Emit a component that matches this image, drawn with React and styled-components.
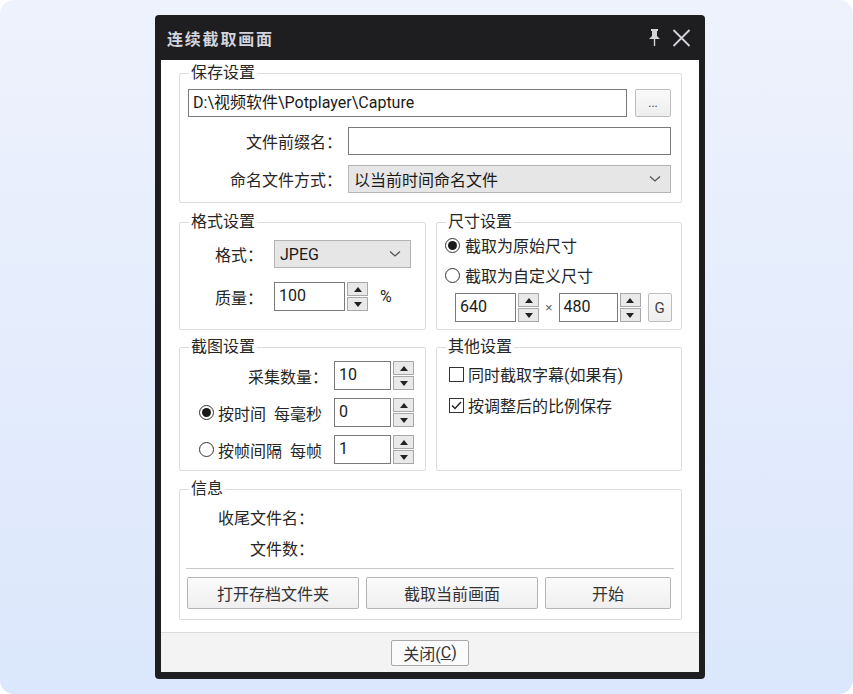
import React from 'react';
import styled, { createGlobalStyle } from 'styled-components';

const Global = createGlobalStyle`
  html, body { margin: 0; padding: 0; background: #ffffff; }
  body { font-family: "Roboto", "Noto Sans CJK SC", sans-serif; color: #262626; }
  * { box-sizing: border-box; }
`;

const Stage = styled.div`
  width: 853px;
  height: 694px;
  border-radius: 14px;
  background: linear-gradient(180deg, #eef2fc 0%, #dbe7fc 100%);
  padding: 15px 0 0 155px;
`;

const Window = styled.div`
  width: 550px;
  height: 664px;
  background: #1e1e21;
  border-radius: 4px;
  padding: 0 6px 7px;
  display: flex;
  flex-direction: column;
`;

const TitleBar = styled.div`
  height: 45px;
  display: flex;
  align-items: center;
  justify-content: space-between;
  padding: 0 8px 0 6px;
`;

const Title = styled.div`
  font-family: "Noto Sans CJK SC", sans-serif;
  font-size: 16px;
  font-weight: 700;
  letter-spacing: 1.8px;
  color: #d4d4dc;
`;

const TitleIcons = styled.div`
  display: flex;
  align-items: center;
  gap: 11px;
`;

const Body = styled.div`
  flex: 1;
  background: #ffffff;
  display: flex;
  flex-direction: column;
`;

const Main = styled.div`
  flex: 1;
  padding: 3px 17px 12px 18px;
  display: flex;
  flex-direction: column;
`;

const Footer = styled.div`
  height: 40px;
  border-top: 1px solid #dadada;
  background: #f3f3f3;
  display: flex;
  align-items: center;
  justify-content: center;
`;

const Row2 = styled.div`
  display: grid;
  grid-template-columns: 247px 246px;
  column-gap: 10px;
  margin-top: ${p => p.$mt}px;
`;

const Group = styled.fieldset`
  margin: ${p => p.$mt || 0}px 0 0 0;
  padding: 0;
  border: 1px solid #dcdcdc;
  border-radius: 2px;
  min-width: 0;
`;

const Legend = styled.legend`
  margin-left: 9px;
  padding: 0 2px;
  font-size: 16px;
  line-height: 20px;
  color: #262626;
`;

const Inner = styled.div`
  padding: ${p => p.$pad};
  display: flex;
  flex-direction: column;
  gap: ${p => p.$gap || 0}px;
`;

const PathRow = styled.div`
  display: flex;
  gap: 8px;
  height: 28px;
`;

const FormRow = styled.div`
  display: grid;
  grid-template-columns: ${p => p.$label}px 1fr;
  column-gap: ${p => p.$gap || 6}px;
  align-items: center;
  height: ${p => p.$h || 28}px;
`;

const Label = styled.div`
  font-size: 16px;
  text-align: right;
  white-space: nowrap;
  color: #262626;
`;

const TextBox = styled.div`
  height: 100%;
  width: ${p => (p.$w ? `${p.$w}px` : 'auto')};
  flex: ${p => (p.$w ? 'none' : '1')};
  border: 1px solid #7a7a7a;
  background: #fff;
  font-size: 16px;
  line-height: 26px;
  padding-left: 4px;
  white-space: nowrap;
  overflow: hidden;
  color: #1a1a1a;
`;

const SmallButton = styled.div`
  width: ${p => p.$w}px;
  height: 100%;
  margin-left: ${p => p.$ml || 0}px;
  border: 1px solid #bdbdbd;
  border-radius: 2px;
  background: linear-gradient(180deg, #fafafa, #eeeeee);
  display: flex;
  align-items: center;
  justify-content: center;
  font-size: ${p => p.$fs || 16}px;
  color: #444;
  flex: none;
`;

const Combo = styled.div`
  height: 28px;
  width: ${p => (p.$w ? `${p.$w}px` : 'auto')};
  border: 1px solid #b4b4b4;
  background: #e6e6e6;
  display: flex;
  align-items: center;
  justify-content: space-between;
  padding: 0 9px 0 5px;
  font-size: 16px;
  color: #1a1a1a;
`;

const SpinWrap = styled.div`
  display: flex;
  align-items: stretch;
  height: 29px;
  gap: 2px;
  flex: none;
`;

const SpinButtons = styled.div`
  width: 21px;
  display: flex;
  flex-direction: column;
  gap: 1px;
`;

const SpinBtn = styled.div`
  flex: 1;
  border: 1px solid #a8a8a8;
  background: #e9e9e9;
  display: flex;
  align-items: center;
  justify-content: center;
`;

const Inline = styled.div`
  display: flex;
  align-items: center;
  gap: ${p => p.$gap || 0}px;
  height: ${p => p.$h || 24}px;
  padding-left: ${p => p.$pl || 0}px;
  font-size: 16px;
  white-space: nowrap;
`;

const Mark = styled.div`
  width: 15px;
  height: 15px;
  flex: none;
  border: 1px solid #333;
  border-radius: ${p => (p.$round ? '50%' : '0')};
  display: flex;
  align-items: center;
  justify-content: center;
  background: #fff;
`;

const Dot = styled.div`
  width: 9px;
  height: 9px;
  border-radius: 50%;
  background: #1a1a1a;
`;

const Percent = styled.span`
  font-size: 16px;
  margin-left: 12px;
  align-self: center;
`;

const Times = styled.span`
  font-family: "Liberation Sans", sans-serif;
  font-size: 13px;
  color: #555;
  margin: 0 6px;
  align-self: center;
`;

const Separator = styled.div`
  margin: 8px -3px 0 -1px;
  height: 2px;
  border-top: 1px solid #c8c8c8;
  border-bottom: 1px solid #fff;
`;

const ButtonRow = styled.div`
  display: flex;
  gap: 7px;
  margin-top: 7px;
  height: 32px;
`;

const Button = styled.div`
  width: ${p => p.$w}px;
  height: 100%;
  border: 1px solid #b4b4b4;
  border-radius: 2px;
  background: linear-gradient(180deg, #fbfbfb, #efefef);
  display: flex;
  align-items: center;
  justify-content: center;
  font-size: 16px;
  color: #333;
`;

const CloseButton = styled(Button)`
  height: 26px;
  background: #fbfbfb;
  border-color: #a8a8a8;
`;

const Under = styled.span`
  text-decoration: underline;
`;

const Chevron = () => (
  <svg width="12" height="8" viewBox="0 0 12 8">
    <path d="M1 1.5 L6 6 L11 1.5" fill="none" stroke="#555" strokeWidth="1.3" />
  </svg>
);

const Tri = ({ up }) => (
  <svg width="8" height="5" viewBox="0 0 8 5">
    <path d={up ? 'M0 5 L4 0 L8 5 Z' : 'M0 0 L4 5 L8 0 Z'} fill="#222" />
  </svg>
);

const Spin = ({ value, w }) => (
  <SpinWrap>
    <TextBox $w={w}>{value}</TextBox>
    <SpinButtons>
      <SpinBtn><Tri up /></SpinBtn>
      <SpinBtn><Tri /></SpinBtn>
    </SpinButtons>
  </SpinWrap>
);

const Radio = ({ checked }) => (
  <Mark $round>{checked && <Dot />}</Mark>
);

const Check = ({ checked }) => (
  <Mark>
    {checked && (
      <svg width="11" height="9" viewBox="0 0 11 9">
        <path d="M1 4.5 L4 7.5 L10 1" fill="none" stroke="#222" strokeWidth="1.4" />
      </svg>
    )}
  </Mark>
);

const PinIcon = () => (
  <svg width="13" height="17" viewBox="0 0 13 17">
    <path d="M3 0 H10 V2 H9 V7 L12 10 H7.2 V17 H5.8 V10 H1 L4 7 V2 H3 Z" fill="#d4d4d8" />
  </svg>
);

const CloseIcon = () => (
  <svg width="19" height="18" viewBox="0 0 19 18">
    <path d="M1.5 1 L17.5 17 M17.5 1 L1.5 17" stroke="#d4d4d8" strokeWidth="1.8" />
  </svg>
);

export default function App() {
  return (
    <>
      <Global />
      <Stage>
        <Window>
          <TitleBar>
            <Title>连续截取画面</Title>
            <TitleIcons>
              <PinIcon />
              <CloseIcon />
            </TitleIcons>
          </TitleBar>
          <Body>
            <Main>
              <Group>
                <Legend>保存设置</Legend>
                <Inner $pad="6px 10px 9px 8px" $gap={10}>
                  <PathRow>
                    <TextBox>D:\视频软件\Potplayer\Capture</TextBox>
                    <SmallButton $w={36} $fs={12}>...</SmallButton>
                  </PathRow>
                  <FormRow $label={154}>
                    <Label>文件前缀名：</Label>
                    <TextBox />
                  </FormRow>
                  <FormRow $label={154}>
                    <Label>命名文件方式：</Label>
                    <Combo>
                      <span>以当前时间命名文件</span>
                      <Chevron />
                    </Combo>
                  </FormRow>
                </Inner>
              </Group>

              <Row2 $mt={9}>
                <Group>
                  <Legend>格式设置</Legend>
                  <Inner $pad="8px 0 17px 0" $gap={14}>
                    <FormRow $label={83} $gap={11}>
                      <Label>格式：</Label>
                      <Combo $w={137}>
                        <span>JPEG</span>
                        <Chevron />
                      </Combo>
                    </FormRow>
                    <FormRow $label={83} $gap={11} $h={29}>
                      <Label>质量：</Label>
                      <Inline $h={29}>
                        <Spin value="100" w={71} />
                        <Percent>%</Percent>
                      </Inline>
                    </FormRow>
                  </Inner>
                </Group>
                <Group>
                  <Legend>尺寸设置</Legend>
                  <Inner $pad="1px 9px 7px 8px" $gap={6}>
                    <Inline $gap={5}>
                      <Radio checked />
                      <span>截取为原始尺寸</span>
                    </Inline>
                    <Inline $gap={5}>
                      <Radio />
                      <span>截取为自定义尺寸</span>
                    </Inline>
                    <Inline $h={29} $pl={10}>
                      <Spin value="640" w={61} />
                      <Times>×</Times>
                      <Spin value="480" w={59} />
                      <SmallButton $w={24} $fs={15} $ml={7}>G</SmallButton>
                    </Inline>
                  </Inner>
                </Group>
              </Row2>

              <Row2 $mt={7}>
                <Group>
                  <Legend>截图设置</Legend>
                  <Inner $pad="4px 0 6px 0" $gap={8}>
                    <FormRow $label={148} $h={29}>
                      <Label>采集数量：</Label>
                      <Spin value="10" w={57} />
                    </FormRow>
                    <FormRow $label={148} $h={29}>
                      <Inline $gap={4} $pl={19} $h={29}>
                        <Radio checked />
                        <span>按时间&nbsp;&nbsp;每毫秒</span>
                      </Inline>
                      <Spin value="0" w={57} />
                    </FormRow>
                    <FormRow $label={148} $h={29}>
                      <Inline $gap={4} $pl={19} $h={29}>
                        <Radio />
                        <span>按帧间隔&nbsp;&nbsp;每帧</span>
                      </Inline>
                      <Spin value="1" w={57} />
                    </FormRow>
                  </Inner>
                </Group>
                <Group>
                  <Legend>其他设置</Legend>
                  <Inner $pad="5px 8px 6px 12px" $gap={7}>
                    <Inline $gap={4}>
                      <Check />
                      <span>同时截取字幕(如果有)</span>
                    </Inline>
                    <Inline $gap={4}>
                      <Check checked />
                      <span>按调整后的比例保存</span>
                    </Inline>
                  </Inner>
                </Group>
              </Row2>

              <Group $mt={8}>
                <Legend>信息</Legend>
                <Inner $pad="6px 10px 10px 7px">
                  <FormRow $label={127} $h={24}>
                    <Label>收尾文件名：</Label>
                    <span />
                  </FormRow>
                  <FormRow $label={127} $h={24} style={{ marginTop: 7 }}>
                    <Label>文件数：</Label>
                    <span />
                  </FormRow>
                  <Separator />
                  <ButtonRow>
                    <Button $w={172}>打开存档文件夹</Button>
                    <Button $w={172}>截取当前画面</Button>
                    <Button $w={126}>开始</Button>
                  </ButtonRow>
                </Inner>
              </Group>
            </Main>
            <Footer>
              <CloseButton $w={78}>关闭(<Under>C</Under>)</CloseButton>
            </Footer>
          </Body>
        </Window>
      </Stage>
    </>
  );
}
